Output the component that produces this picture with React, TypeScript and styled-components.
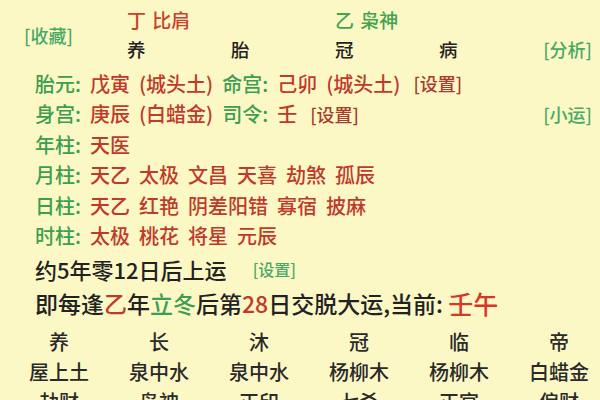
import styled, { createGlobalStyle } from "styled-components";

const Global = createGlobalStyle`
	html, body {
		margin: 0;
		padding: 0;
		background: #fbf8c6;
		overflow: hidden;
	}
	body {
		font-family: "Noto Sans CJK SC", "Noto Sans", sans-serif;
		font-weight: 500;
		color: #222;
	}
`;

const RED = "#bf3a2b";
const GREEN = "#3d9e52";

const Page = styled.main`
	width: 600px;
	height: 400px;
	overflow: hidden;
`;

const Header = styled.section`
	display: grid;
	grid-template-columns: 127px repeat(4, 104px) 1fr;
	grid-template-rows: 30px 30px;
	padding-top: 4px;
	align-items: center;
`;

const Collect = styled.span`
	grid-column: 1;
	grid-row: 1 / span 2;
	padding-left: 24px;
	padding-top: 2px;
	font-size: 18px;
	color: #4aa866;
`;

const God = styled.span<{ $tone: string; $col: number }>`
	grid-column: ${p => p.$col};
	grid-row: 1;
	font-size: 19px;
	color: ${p => p.$tone};
	white-space: nowrap;
	word-spacing: 2px;
`;

const Stage = styled.span<{ $col: number }>`
	grid-column: ${p => p.$col};
	grid-row: 2;
	font-size: 18.5px;
	color: #222;
`;

const Analyse = styled.span`
	grid-column: 6;
	grid-row: 2;
	justify-self: end;
	padding-right: 8px;
	font-size: 18px;
	color: #4aa866;
`;

const Info = styled.section`
	display: flex;
	flex-direction: column;
	padding: 3.75px 8px 0 35px;
`;

const Line = styled.div`
	display: flex;
	align-items: center;
	height: 30.5px;
	font-size: 20px;
	white-space: nowrap;
`;

const Label = styled.span`
	color: ${GREEN};
	margin-right: 9px;
`;

const Value = styled.span`
	color: ${RED};
	margin-right: 9px;
	word-spacing: 4.5px;
`;

const Link = styled.span<{ $tone: string; $size?: number }>`
	color: ${p => p.$tone};
	font-size: ${p => p.$size ?? 18}px;
	margin-left: 4px;
`;

const Push = styled.span`
	margin-left: auto;
`;

const Luck = styled.div`
	display: flex;
	align-items: center;
	height: 32px;
	margin-top: 2px;
	padding-left: 35px;
	font-size: 22px;
	color: #222;
	white-space: nowrap;
	gap: 22px;
`;

const Cycle = styled.div`
	display: flex;
	align-items: center;
	height: 36px;
	padding-left: 35px;
	font-size: 23px;
	color: #222;
	white-space: nowrap;
`;

const Mark = styled.span<{ $tone: string; $size?: number }>`
	color: ${p => p.$tone};
	font-size: ${p => p.$size ?? 23}px;
`;

const Table = styled.section`
	display: grid;
	grid-template-columns: repeat(6, 100px);
	grid-auto-rows: 30px;
	margin: 6px 0 0 9px;
	align-items: center;
	justify-items: center;
	font-size: 20px;
	color: #2a2a2a;
`;

const stages = ["养", "胎", "冠", "病"];

const table = [
	["养", "长", "沐", "冠", "临", "帝"],
	["屋上土", "泉中水", "泉中水", "杨柳木", "杨柳木", "白蜡金"],
	["劫财", "枭神", "正印", "七杀", "正官", "偏财"],
];

const pillars: [string, string][] = [
	["年柱:", "天医"],
	["月柱:", "天乙 太极 文昌 天喜 劫煞 孤辰"],
	["日柱:", "天乙 红艳 阴差阳错 寡宿 披麻"],
	["时柱:", "太极 桃花 将星 元辰"],
];

export default function App() {
	return (
		<Page>
			<Global />
			<Header>
				<Collect>[收藏]</Collect>
				<God $tone="#c8432e" $col={2}>丁 比肩</God>
				<God $tone="#41a24f" $col={4}>乙 枭神</God>
				{stages.map((s, i) => (
					<Stage key={i} $col={i + 2}>{s}</Stage>
				))}
				<Analyse>[分析]</Analyse>
			</Header>
			<Info>
				<Line>
					<Label>胎元:</Label>
					<Value>戊寅 (城头土)</Value>
					<Label>命宫:</Label>
					<Value>己卯 (城头土)</Value>
					<Link $tone="#a83a2e">[设置]</Link>
				</Line>
				<Line>
					<Label>身宫:</Label>
					<Value>庚辰 (白蜡金)</Value>
					<Label>司令:</Label>
					<Value>壬</Value>
					<Link $tone="#a83a2e">[设置]</Link>
					<Push />
					<Link $tone="#4aa866">[小运]</Link>
				</Line>
				{pillars.map(([l, v]) => (
					<Line key={l}>
						<Label>{l}</Label>
						<Value>{v}</Value>
					</Line>
				))}
			</Info>
			<Luck>
				<span>约5年零12日后上运</span>
				<Link $tone="#4aa866" $size={16}>[设置]</Link>
			</Luck>
			<Cycle>
				即每逢<Mark $tone={RED}>乙</Mark>年<Mark $tone={GREEN}>立冬</Mark>后第
				<Mark $tone={RED}>28</Mark>日交脱大运,当前:&nbsp;
				<Mark $tone="#d9362a" $size={25}>壬午</Mark>
			</Cycle>
			<Table>
				{table.flat().map((c, i) => (
					<span key={i}>{c}</span>
				))}
			</Table>
		</Page>
	);
}
